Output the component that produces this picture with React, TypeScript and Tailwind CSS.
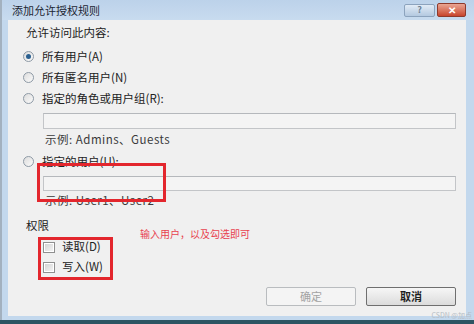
const font = { fontFamily: '"Microsoft YaHei", "Noto Sans CJK SC", "Noto Sans", sans-serif' };

function Radio({ checked }: { checked?: boolean }) {
  return (
    <span className="flex h-[11px] w-[11px] items-center justify-center rounded-full border border-[#8e9aa6] bg-gradient-to-br from-[#dcdcdc] to-[#fbfbfb]">
      {checked && <span className="h-[5px] w-[5px] rounded-full bg-[#2a5f8f]" />}
    </span>
  );
}

function Checkbox() {
  return (
    <span className="flex h-[11px] w-[12px] items-center justify-center border border-[#8f8f8f] bg-white">
      <span className="h-[7px] w-[8px] bg-gradient-to-br from-[#d4d4d4] to-[#f4f4f4]" />
    </span>
  );
}

const radios = [
  { label: '所有用户(A)', checked: true },
  { label: '所有匿名用户(N)' },
  { label: '指定的角色或用户组(R):' },
];

export default function App() {
  return (
    <div className="flex h-[324px] w-[474px] flex-col overflow-hidden text-[#222]" style={font}>
      <div className="flex flex-1 flex-col border-l-[2px] border-[#a3b1bf] bg-[#c3d8ed]">
        {/* Title bar */}
        <div className="flex h-[20px] items-center bg-gradient-to-b from-[#bcd2ea] to-[#c8dbef] pl-[10px] pr-[8px]">
          <span className="text-[11px] text-[#1d2633]">添加允许授权规则</span>
          <div className="ml-auto flex items-center gap-[2px]">
            <div className="flex h-[13px] w-[31px] items-center justify-center rounded-[2px] border border-[#8ca3bd] bg-gradient-to-b from-[#e1ebf6] to-[#b4c9e0] text-[9px] font-bold text-[#6d7f93]">
              ?
            </div>
            <div className="flex h-[14px] w-[29px] items-center justify-center rounded-[2px] border border-[#8e3a2c] bg-gradient-to-b from-[#e9a593] to-[#c7432c] text-[10px] font-bold leading-none text-white">
              ✕
            </div>
          </div>
        </div>

        {/* Content */}
        <div className="relative ml-[6px] mr-[8px] flex flex-1 flex-col bg-[#f0f0f0] pl-[15px] pr-[10px] text-[11.5px]">
          <div className="mt-[6px] flex h-[14px] items-center pl-[3px]">允许访问此内容:</div>

          <div className="mt-[6px] flex flex-col">
            {radios.map((r) => (
              <div key={r.label} className="flex h-[21px] items-center gap-[8px]">
                <Radio checked={r.checked} />
                <span>{r.label}</span>
              </div>
            ))}
          </div>

          <div className="ml-[20px] mt-[4px] h-[16px] border border-[#c3c5c8] border-t-[#b5b8bc] bg-[#f4f4f4]" />
          <div className="ml-[22px] mt-[1px] flex h-[20px] items-center tracking-[0.5px] text-[#3a3a3a]">示例: Admins、Guests</div>

          <div className="mt-[1px] flex h-[21px] items-center gap-[8px]">
            <Radio />
            <span>指定的用户(U):</span>
          </div>
          <div className="ml-[20px] mt-[4px] h-[15px] border border-[#c3c5c8] border-t-[#b5b8bc] bg-[#f4f4f4]" />
          <div className="ml-[22px] flex h-[20px] items-center tracking-[0.5px] text-[#3a3a3a]">示例: User1、User2</div>

          <div className="mt-[5px] flex h-[20px] items-center pl-[3px]">权限</div>
          <div className="mt-[1px] flex flex-col pl-[20px]">
            {['读取(D)', '写入(W)'].map((c) => (
              <div key={c} className="flex h-[20px] items-center gap-[7px]">
                <Checkbox />
                <span>{c}</span>
              </div>
            ))}
          </div>

          <div className="mt-[10px] flex justify-end gap-[10px]">
            <button className="flex h-[19px] w-[90px] items-center justify-center rounded-[2px] border border-[#b9bcbf] bg-[#f4f4f4] text-[11px] text-[#a3a3a3]">
              确定
            </button>
            <button className="flex h-[19px] w-[90px] items-center justify-center rounded-[2px] border border-[#6f6f6f] bg-gradient-to-b from-[#f6f6f6] to-[#dcdcdc] text-[11px] font-bold text-[#1f1f1f]">
              取消
            </button>
          </div>

          {/* Annotations */}
          <div className="absolute left-[29px] top-[143px] h-[39px] w-[129px] border-[3px] border-[#e3262d]" />
          <div className="absolute left-[30px] top-[217px] h-[43px] w-[75px] border-[3px] border-[#e3262d]" />
          <div className="absolute left-[132px] top-[206px] text-[10px] text-[#e8424f]">输入用户，以及勾选即可</div>
          <div className="absolute bottom-[-4px] right-[-6px] text-[7px] text-[#b5bcc4]">CSDN @加点</div>
        </div>
        <div className="h-[4px]" />
      </div>
      <div className="h-[4px] bg-[#2d5563]" />
    </div>
  );
}
